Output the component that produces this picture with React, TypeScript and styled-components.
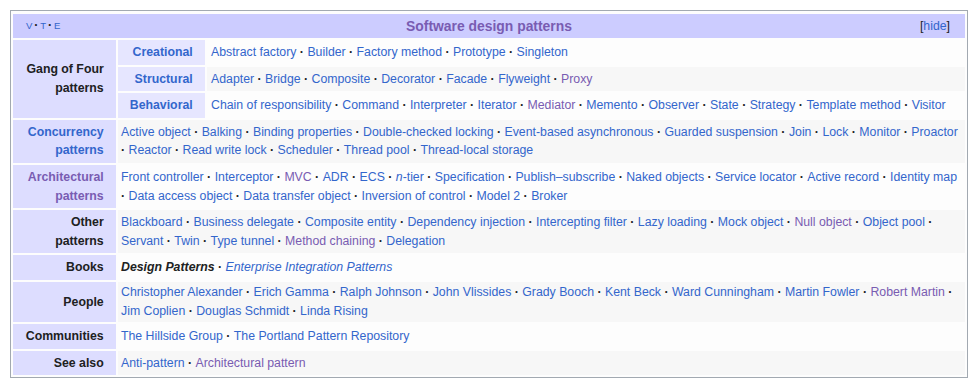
import React from "react";
import styled, { createGlobalStyle } from "styled-components";

const GlobalStyle = createGlobalStyle`
  html, body { margin: 0; background: #fff; }
  body {
    padding: 10px 11px 0 10px;
    font-family: "Liberation Sans", Arial, sans-serif;
    color: #202122;
  }
`;

const Navbox = styled.div`
  border: 1px solid #a2a9b1;
  padding: 3px 2px 2px;
  background: #fdfdfd;
  font-size: 12.3px;
  line-height: 18.48px;
  display: grid;
  grid-template-columns: 103px 1fr;
  gap: 2px;
`;

const TitleBar = styled.div`
  grid-column: 1 / -1;
  background: #ccf;
  height: 24px;
  display: grid;
  grid-template-columns: 1fr auto 1fr;
  align-items: center;
`;

const Navbar = styled.ul`
  margin: 0;
  padding: 0 0 0 13px;
  list-style: none;
  word-spacing: -0.125em;
  font-size: 12.3px;

  li { display: inline; }
  li a { font-size: 9.6px; }
  li:not(:last-child)::after {
    content: " · ";
    font-weight: bold;
  }
`;

const TitleText = styled.a`
  font-size: 13.9px;
  font-weight: bold;
  color: #795cb2;
  text-decoration: none;
`;

const Hide = styled.span`
  justify-self: end;
  padding-right: 15px;
`;

const Link = styled.a<{ $visited?: boolean; $italic?: boolean; $wrap?: boolean }>`
  color: ${(p) => (p.$visited ? "#795cb2" : "#3366cc")};
  font-style: ${(p) => (p.$italic ? "italic" : "normal")};
  text-decoration: none;
  white-space: ${(p) => (p.$wrap ? "normal" : "nowrap")};
`;

const SelfLink = styled.b`
  font-style: italic;
  white-space: nowrap;
`;

const Group = styled.div<{ $sub?: boolean }>`
  background: ${(p) => (p.$sub ? "#e6e6ff" : "#ddf")};
  padding: 3.08px 12.32px;
  font-weight: bold;
  text-align: right;
  display: flex;
  align-items: center;
  justify-content: flex-end;
`;

const List = styled.div<{ $even?: boolean; $sub?: boolean }>`
  background: ${(p) => (p.$even ? "#f7f7f7" : "transparent")};
  padding: 1.54px 3px 1.54px ${(p) => (p.$sub ? "4px" : "3px")};
  display: flex;
  align-items: center;
`;

const Items = styled.ul`
  margin: 0;
  padding: 0;
  list-style: none;

  li { display: inline; }
  li:not(:last-child)::after {
    content: " · ";
    font-weight: bold;
    color: #202122;
  }
`;

const SubGrid = styled.div`
  display: grid;
  grid-template-columns: 87px 1fr;
  gap: 2px;
`;

type Item = { t: React.ReactNode; v?: boolean; i?: boolean; self?: boolean };

const it = (t: React.ReactNode, v = false): Item => ({ t, v });

const ItemList = ({ items }: { items: Item[] }) => (
  <Items>
    {items.map((x, k) => (
      <li key={k}>
        {x.self ? (
          <SelfLink>{x.t}</SelfLink>
        ) : (
          <Link href="#" $visited={x.v} $italic={x.i}>
            {x.t}
          </Link>
        )}
      </li>
    ))}
  </Items>
);

const gof: { label: string; items: Item[] }[] = [
  {
    label: "Creational",
    items: ["Abstract factory", "Builder", "Factory method", "Prototype", "Singleton"].map((s) => it(s)),
  },
  {
    label: "Structural",
    items: [
      ...["Adapter", "Bridge", "Composite", "Decorator", "Facade", "Flyweight"].map((s) => it(s)),
      it("Proxy", true),
    ],
  },
  {
    label: "Behavioral",
    items: [
      it("Chain of responsibility"),
      it("Command"),
      it("Interpreter"),
      it("Iterator"),
      it("Mediator", true),
      it("Memento"),
      it("Observer"),
      it("State"),
      it("Strategy"),
      it("Template method"),
      it("Visitor"),
    ],
  },
];

const rows: { label: React.ReactNode; items: Item[] }[] = [
  {
    label: (
      <Link href="#" $wrap>
        Concurrency patterns
      </Link>
    ),
    items: [
      "Active object", "Balking", "Binding properties", "Double-checked locking",
      "Event-based asynchronous", "Guarded suspension", "Join", "Lock", "Monitor",
      "Proactor", "Reactor", "Read write lock", "Scheduler", "Thread pool",
      "Thread-local storage",
    ].map((s) => it(s)),
  },
  {
    label: (
      <Link href="#" $visited $wrap>
        Architectural patterns
      </Link>
    ),
    items: [
      it("Front controller"),
      it("Interceptor"),
      it("MVC", true),
      it("ADR"),
      it("ECS"),
      it(<><i>n</i>-tier</>),
      it("Specification"),
      it("Publish–subscribe"),
      it("Naked objects"),
      it("Service locator"),
      it("Active record"),
      it("Identity map"),
      it("Data access object"),
      it("Data transfer object"),
      it("Inversion of control"),
      it("Model 2"),
      it("Broker"),
    ],
  },
  {
    label: "Other patterns",
    items: [
      it("Blackboard"),
      it("Business delegate"),
      it("Composite entity"),
      it("Dependency injection"),
      it("Intercepting filter"),
      it("Lazy loading"),
      it("Mock object"),
      it("Null object", true),
      it("Object pool"),
      it("Servant"),
      it("Twin"),
      it("Type tunnel"),
      it("Method chaining", true),
      it("Delegation"),
    ],
  },
  {
    label: "Books",
    items: [
      { t: "Design Patterns", self: true },
      { t: "Enterprise Integration Patterns", i: true },
    ],
  },
  {
    label: "People",
    items: [
      it("Christopher Alexander"),
      it("Erich Gamma"),
      it("Ralph Johnson"),
      it("John Vlissides"),
      it("Grady Booch"),
      it("Kent Beck"),
      it("Ward Cunningham"),
      it("Martin Fowler"),
      it("Robert Martin", true),
      it("Jim Coplien"),
      it("Douglas Schmidt"),
      it("Linda Rising"),
    ],
  },
  {
    label: "Communities",
    items: [it("The Hillside Group"), it("The Portland Pattern Repository")],
  },
  {
    label: "See also",
    items: [it("Anti-pattern"), it("Architectural pattern", true)],
  },
];

export default function App() {
  return (
    <>
      <GlobalStyle />
      <Navbox>
        <TitleBar>
          <Navbar>
            <li><Link href="#">V</Link></li>
            <li><Link href="#">T</Link></li>
            <li><Link href="#">E</Link></li>
          </Navbar>
          <TitleText href="#">Software design patterns</TitleText>
          <Hide>
            [<Link href="#">hide</Link>]
          </Hide>
        </TitleBar>

        <Group>
          <span>Gang of Four patterns</span>
        </Group>
        <SubGrid>
          {gof.map((g, k) => (
            <React.Fragment key={g.label}>
              <Group $sub>
                <span>
                  <Link href="#">{g.label}</Link>
                </span>
              </Group>
              <List $sub $even={k % 2 === 1}>
                <ItemList items={g.items} />
              </List>
            </React.Fragment>
          ))}
        </SubGrid>

        {rows.map((r, k) => (
          <React.Fragment key={k}>
            <Group>
              <span>{r.label}</span>
            </Group>
            <List $even={k % 2 === 0}>
              <ItemList items={r.items} />
            </List>
          </React.Fragment>
        ))}
      </Navbox>
    </>
  );
}
